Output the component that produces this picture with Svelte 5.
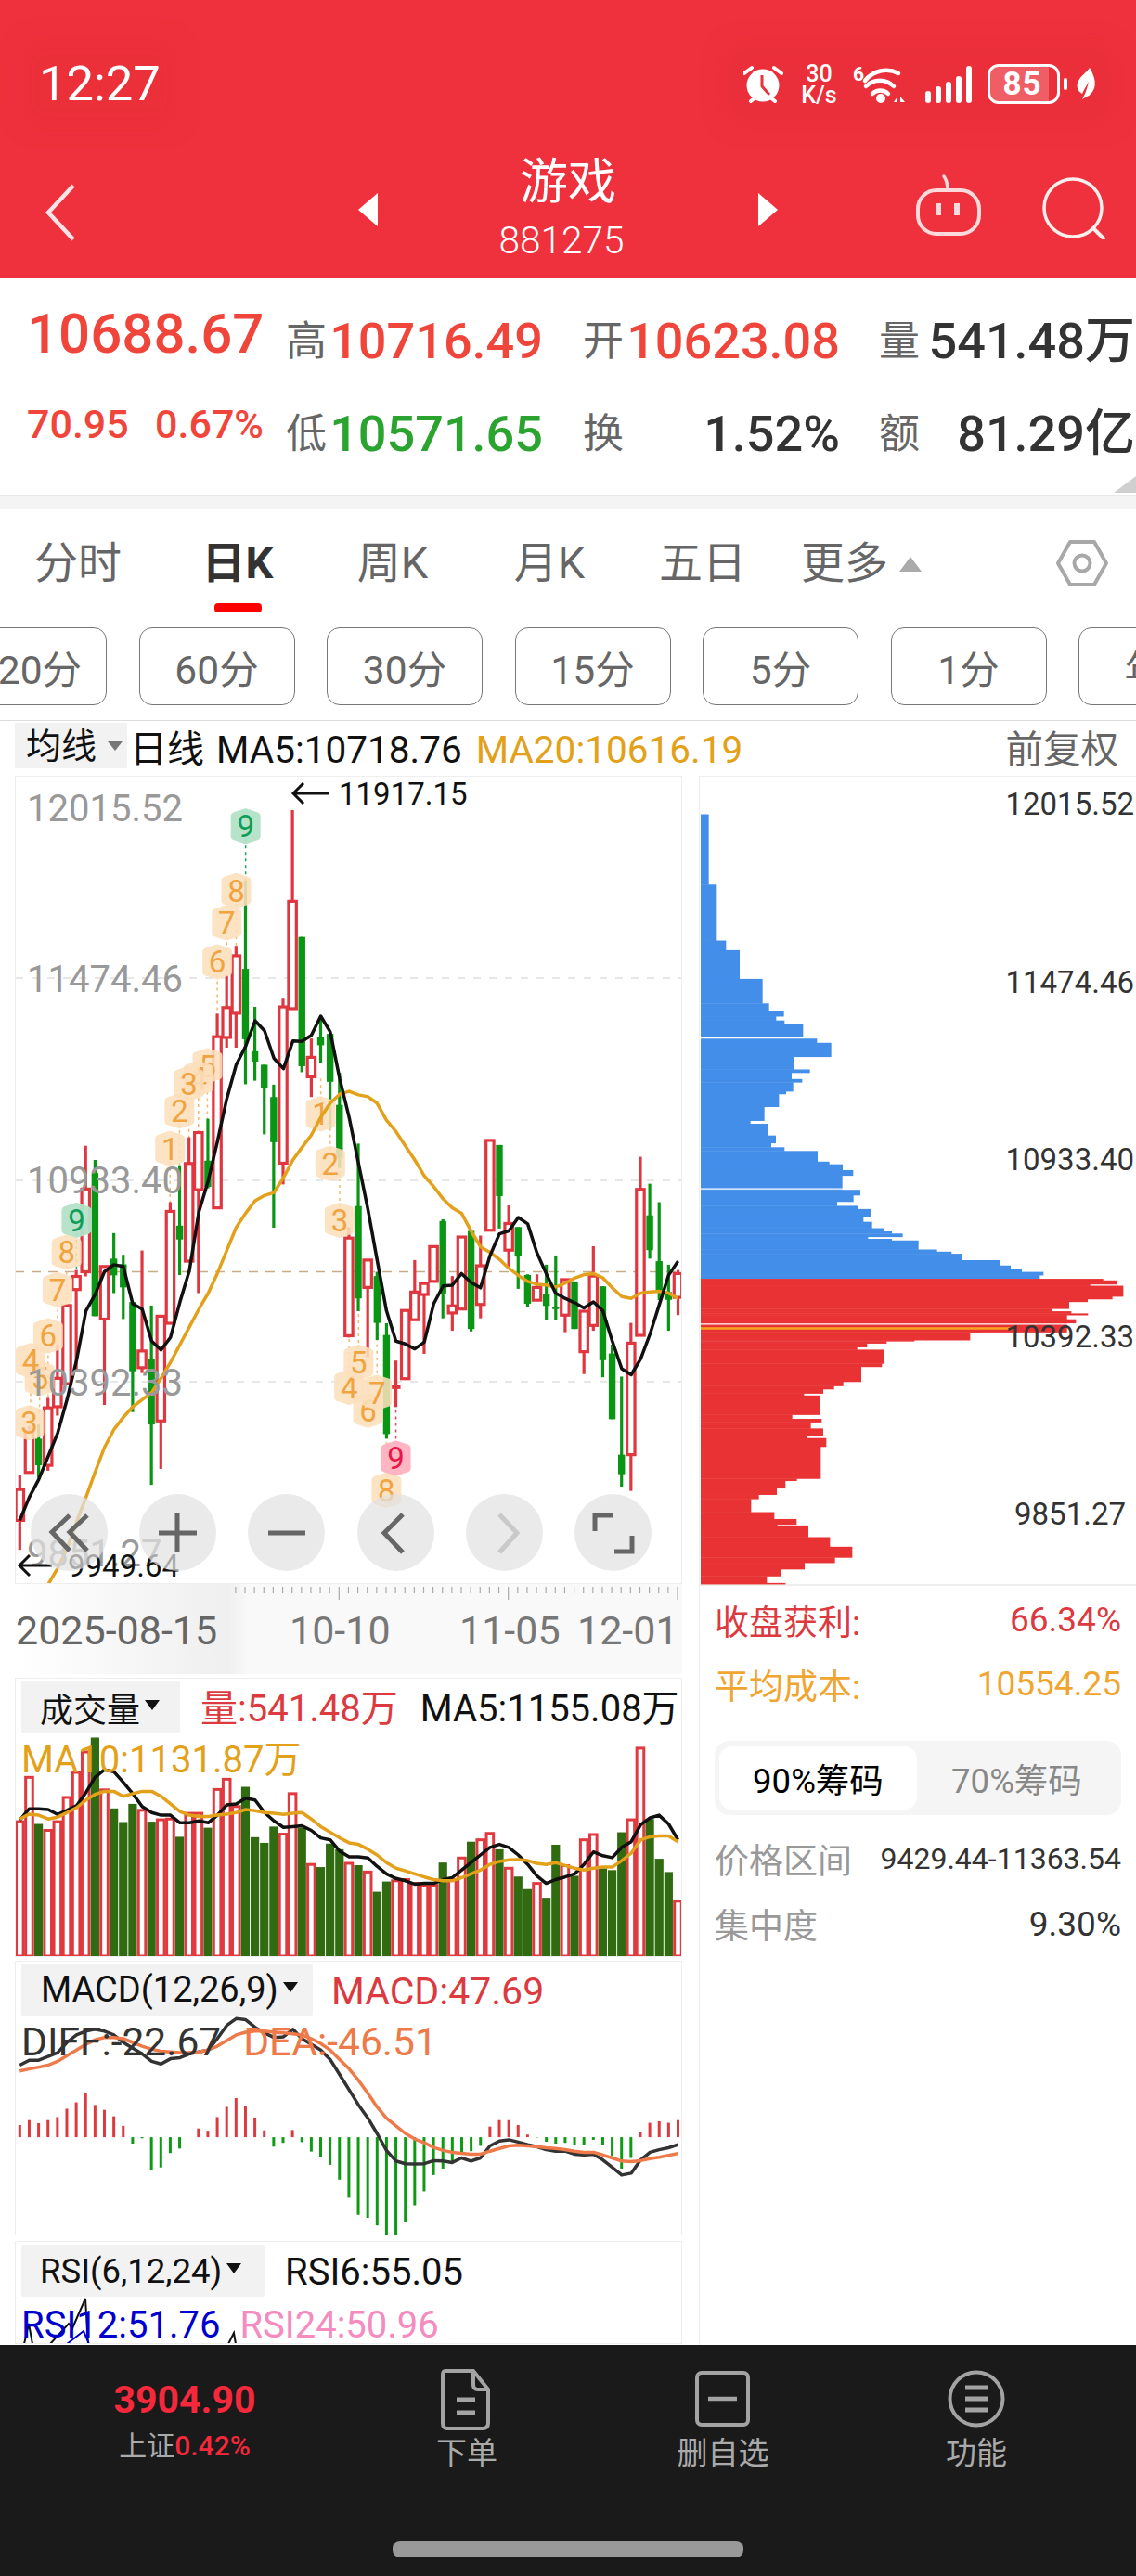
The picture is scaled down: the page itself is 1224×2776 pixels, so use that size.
<script>
  const X = (z) => z / 2.063;
  const Y3 = (z) => 1140 + z / 2.613;
  const Y4 = (z) => 1800 + z / 2.45;
  const cx = (i) => X(44 + 20.9 * i);
  const pts = (s, Y) => s.trim().split(/\s+/).map((p) => { const [a, b] = p.split(','); return `${X(+a).toFixed(1)},${Y(+b).toFixed(1)}`; }).join(' ');

  const raw = [
    [1178,1218,1305,1388,'r'],[1040,1055,1170,1170,'r'],[1035,1075,1150,1185,'g'],[960,988,1150,1165,'r'],[810,905,985,1010,'r'],
    [700,700,920,920,'r'],[600,618,655,880,'r'],[250,372,605,618,'r'],[290,327,730,730,'g'],[590,590,738,980,'r'],
    [496,568,615,665,'g'],[557,584,649,738,'g'],[690,690,885,1000,'g'],[545,828,875,890,'r'],[700,850,1035,1205,'g'],
    [730,730,1025,1160,'r'],[409,435,750,750,'r'],[305,475,514,614,'g'],[226,300,575,575,'r'],[213,213,374,665,'r'],
    [174,292,366,370,'g'],[-122,-57,425,425,'r'],[-231,-139,-55,-26,'r'],[-313,-285,-123,-26,'r'],[-498,-248,-50,77,'g'],
    [-141,-16,13,67,'g'],[22,22,89,218,'g'],[78,113,240,481,'g'],[-164,-141,299,359,'r'],[-695,-438,-136,-136,'r'],
    [-338,-338,26,43,'g'],[-52,1,56,113,'r'],[-115,-55,-33,17,'g'],[-65,-65,70,200,'g'],[45,135,283,313,'g'],
    [480,510,785,790,'r'],[244,420,680,716,'g'],[572,572,649,845,'r'],[605,617,749,797,'g'],[750,783,1062,1075,'g'],
    [855,923,935,986,'d'],[714,714,906,908,'r'],[572,662,740,740,'r'],[638,638,669,836,'r'],[534,534,632,632,'r'],
    [457,462,666,736,'g'],[617,701,721,771,'r'],[507,507,710,710,'r'],[488,490,766,773,'g'],[503,588,697,736,'r'],
    [235,235,488,488,'r'],[248,248,392,483,'g'],[418,469,544,592,'r'],[479,479,562,653,'g'],[612,614,695,705,'g'],
    [612,649,685,685,'r'],[585,669,701,740,'g'],[559,704,710,740,'g'],[627,627,727,775,'r'],[632,632,766,766,'g'],
    [716,716,830,893,'r'],[533,617,756,771,'r'],[646,646,854,902,'g'],[810,835,1020,1020,'g'],[900,1120,1175,1210,'g'],
    [749,806,1120,1222,'r'],[281,373,784,784,'r'],[357,446,544,568,'g'],[409,575,658,685,'g'],[585,662,684,771,'g'],
    [600,610,677,727,'r']
  ];
  const candles = raw.map((c, i) => ({ x: cx(i), hi: Y3(c[0]), t: Y3(c[1]), b: Y3(c[2]), lo: Y3(c[3]), k: c[4] }));

  const ma5 = pts("44,1305 65,1240 86,1190 107,1125 128,1060 149,965 170,855 191,715 211,670 232,605 253,585 274,590 295,695 316,710 337,800 358,825 379,790 400,690 421,601 442,436 463,348 483,240 504,118 525,22 546,-30 567,-102 588,-74 609,4 630,33 651,-45 671,-44 692,-61 713,-115 734,-71 755,61 776,170 797,300 818,430 838,570 859,715 880,800 901,808 922,822 943,803 964,695 985,645 1005,643 1026,610 1047,635 1068,650 1089,560 1110,498 1131,490 1152,452 1173,470 1193,550 1214,610 1235,665 1256,680 1277,692 1298,707 1319,690 1340,715 1361,800 1382,878 1403,895 1424,850 1445,780 1465,700 1486,615 1507,575", Y3);
  const ma20 = pts("105,1490 128,1440 149,1385 170,1310 191,1240 211,1170 232,1100 253,1050 274,1015 295,985 316,965 337,945 358,905 379,860 400,810 421,760 442,710 463,665 483,610 504,545 525,480 546,440 567,405 588,390 609,382 630,340 651,290 671,255 692,220 713,170 734,130 755,105 776,97 797,107 818,112 838,130 859,178 880,210 901,250 922,290 943,335 964,365 985,400 1005,425 1026,440 1047,490 1068,535 1089,550 1110,570 1131,595 1152,615 1173,632 1193,640 1214,642 1235,648 1256,637 1277,623 1298,613 1319,610 1340,622 1361,650 1382,675 1403,680 1424,665 1445,662 1465,660 1486,665 1507,680", Y3);

  const badges = [
    ['9',546,-650,-498,'g'],['8',525,-468,-313,'o'],['7',504,-378,-231,'o'],['6',483,-268,-122,'o'],
    ['5',461,25,175,'o'],['4',441,60,212,'o'],['3',420,75,226,'o'],['2',399,152,305,'o'],['1',378,258,410,'o'],
    ['9',170,460,600,'g'],['8',148,550,700,'o'],['7',128,655,810,'o'],['6',107,785,960,'o'],['5',88,905,1035,'o'],['4',68,855,1040,'o'],['3',65,1030,1178,'o'],
    ['1',713,160,50,'o'],['2',734,300,200,'o'],['3',755,460,313,'o'],['4',776,930,790,'o'],['5',797,860,716,'o'],['6',818,995,845,'o'],['7',838,945,797,'o'],['8',859,1220,1075,'o'],['9',880,1130,986,'p']
  ].map((b) => ({ d: b[0], x: X(b[1]), y: Y3(b[2]), ty: Y3(b[3]), k: b[4] }));
  const hex = (b) => `${b.x},${b.y - 15} ${b.x + 12},${b.y - 11} ${b.x + 12},${b.y + 11} ${b.x},${b.y + 15} ${b.x - 12},${b.y + 11} ${b.x - 12},${b.y - 11}`;

  const gridY = [1055, 1273, 1490];
  const axisLeft = [['12015.52', 871], ['11474.46', 1055], ['10933.40', 1272], ['10392.33', 1490], ['9851.27', 1674]];
  const ctrlIcons = ['first', 'plus', 'minus', 'prev', 'next', 'full'];

  const volTops = [402,285,408,425,402,338,272,218,180,318,367,403,355,372,402,397,395,442,380,380,418,317,290,362,310,443,458,415,435,328,418,515,522,460,475,512,517,535,587,560,558,555,565,570,570,510,555,498,455,450,433,475,525,547,580,565,603,463,518,545,450,436,525,530,430,397,208,395,500,535,612];
  const volK = raw.map((c) => (c[4] === 'g' ? 'g' : 'r'));
  const volMA = pts("44,398 65,368 86,368 107,370 128,383 149,372 170,360 191,325 211,285 232,265 253,270 274,298 295,328 316,362 337,378 358,385 379,385 400,405 421,405 442,400 463,405 483,385 504,358 525,355 546,340 567,345 588,378 609,400 630,417 651,415 671,413 692,425 713,445 734,450 755,480 776,495 797,495 818,498 838,520 859,540 880,552 901,558 922,567 943,565 964,565 985,555 1005,550 1026,530 1047,510 1068,490 1089,470 1110,462 1131,470 1152,490 1173,515 1193,545 1214,565 1235,555 1256,548 1277,540 1298,515 1319,482 1340,492 1361,497 1382,470 1403,455 1424,410 1445,392 1465,385 1486,408 1507,450", Y4);
  const volMA10 = pts("44,395 65,382 86,385 107,395 128,390 149,378 170,365 191,345 211,330 232,322 253,322 274,335 295,328 316,322 337,322 358,335 379,355 400,375 421,385 442,388 463,388 483,385 504,382 525,378 546,370 567,373 588,378 609,380 630,383 651,380 671,378 692,395 713,415 734,430 755,445 776,458 797,462 818,475 838,490 859,510 880,525 901,532 922,540 943,548 964,555 985,558 1005,558 1026,550 1047,540 1068,530 1089,515 1110,507 1131,503 1152,502 1173,505 1193,512 1214,515 1235,510 1256,518 1277,525 1298,530 1319,525 1340,522 1361,522 1382,505 1403,485 1424,450 1445,442 1465,440 1486,440 1507,455", Y4);

  const macd = [1203,1190,1198,1190,1182,1160,1143,1117,1150,1163,1180,1205,1252,1238,1322,1315,1277,1265,1235,1212,1218,1182,1155,1132,1152,1183,1217,1260,1250,1216,1248,1273,1288,1308,1347,1395,1440,1448,1468,1500,1497,1458,1415,1378,1335,1318,1300,1280,1272,1258,1207,1190,1190,1203,1228,1236,1247,1252,1250,1257,1255,1242,1255,1285,1318,1290,1222,1197,1193,1197,1190];
  const diff = pts("44,1045 65,1032 86,1032 107,1022 128,1012 149,985 170,965 191,955 211,950 232,955 253,965 274,985 295,1000 316,1015 337,1035 358,1042 379,1028 400,1025 421,1015 442,1010 463,1005 483,975 504,940 525,922 546,925 567,945 588,960 609,972 630,970 651,950 671,975 692,990 713,1005 734,1030 755,1070 776,1110 797,1150 818,1185 838,1225 859,1270 880,1298 901,1305 922,1306 943,1305 964,1297 985,1298 1005,1302 1026,1290 1047,1298 1068,1290 1089,1258 1110,1245 1131,1242 1152,1248 1173,1255 1193,1260 1214,1268 1235,1272 1256,1272 1277,1280 1298,1282 1319,1280 1340,1295 1361,1315 1382,1335 1403,1330 1424,1295 1445,1275 1465,1268 1486,1263 1507,1255", Y4);
  const dea = pts("44,1060 65,1055 86,1050 107,1045 128,1035 149,1020 170,1005 191,990 211,978 232,972 253,972 274,975 295,985 316,995 337,1003 358,1008 379,1010 400,1012 421,1012 442,1010 463,1005 483,995 504,980 525,965 546,958 567,955 588,955 609,958 630,960 651,962 671,965 692,975 713,988 734,1005 755,1030 776,1055 797,1085 818,1120 838,1155 859,1185 880,1205 901,1225 922,1240 943,1250 964,1262 985,1270 1005,1275 1026,1278 1047,1280 1068,1280 1089,1272 1110,1265 1131,1258 1152,1256 1173,1258 1193,1260 1214,1263 1235,1265 1256,1268 1277,1272 1298,1275 1319,1275 1340,1282 1361,1290 1382,1298 1403,1300 1424,1297 1445,1292 1465,1288 1486,1283 1507,1278", Y4);

  const blue = [[135,70],[267,96],[372,126],[390,170],[444,244],[490,265],[504,313],[514,288],[522,315],[528,375],[555,420],[564,466],[590,347],[614,397],[620,338],[632,372],[638,343],[655,320],[660,297],[684,250],[710,205],[716,260],[738,287],[752,272],[760,315],[767,422],[787,460],[792,503],[803,537],[813,502],[840,560],[850,538],[862,485],[870,552],[876,596],[890,570],[900,598],[912,635],[918,662],[922,697],[928,585],[932,662],[935,748],[952,808],[956,855],[960,890],[972,1010],[982,1046],[988,1082],[994,1152],[1000,1140],[1007,0]];
  const red = [[1007,1345],[1010,1388],[1017,1303],[1020,1410],[1040,1375],[1045,1295],[1050,1235],[1063,1180],[1068,1242],[1072,1296],[1075,1228],[1083,1257],[1090,1228],[1107,948],[1108,915],[1122,735],[1124,645],[1128,582],[1135,550],[1140,638],[1166,630],[1172,563],[1200,505],[1208,475],[1214,440],[1222,378],[1226,428],[1262,340],[1270,435],[1276,400],[1288,440],[1302,388],[1306,450],[1322,432],[1382,355],[1386,318],[1400,290],[1412,232],[1420,207],[1445,282],[1458,354],[1468,292],[1470,392],[1492,462],[1510,534],[1530,478],[1540,380],[1552,303],[1565,258],[1578,318],[1580,0]];
  const HY = (z) => 800 + z / 1.742;
  const steps = (arr) => arr.slice(0, -1).map((s, i) => ({ y: HY(s[0]), h: HY(arr[i + 1][0]) - HY(s[0]) + 0.4, w: (s[1] - 44) / 3 }));
  const blueRects = steps(blue);
  const redRects = steps(red);
  const histLabels = [['12015.52', 866, 1222], ['11474.46', 1058, 1222], ['10933.40', 1249, 1222], ['10392.33', 1440, 1222], ['9851.27', 1631, 1213]];

  const ticks = Array.from({ length: 48 }, (_, i) => 730 - i * 10.13);
  const chips = ['120分', '60分', '30分', '15分', '5分', '1分', '年K'];
  const tabs = ['分时', '日K', '周K', '月K', '五日'];
</script>

<div class="page">
  <header class="head">
    <div class="status">
      <span class="time">12:27</span>
      <div class="sicons">
        <svg class="alarm" viewBox="800 70 44 42" width="44" height="42" aria-hidden="true">
          <circle cx="821" cy="92" r="17.5" fill="#fff" />
          <path d="M820 81v12l8 9" fill="none" stroke="#e8323b" stroke-width="3" />
          <path d="M801 79l8-6M841 79l-8-6M808 109l5-4M834 109l-5-4" stroke="#fff" stroke-width="4" stroke-linecap="round" />
        </svg>
        <div class="speed"><span>30</span><span>K/s</span></div>
        <svg class="wifi" viewBox="918 68 60 46" width="60" height="46" aria-hidden="true">
          <text x="920" y="87" class="six">6</text>
          <path d="M933 87a29 29 0 0 1 36 -8M934 93a21 21 0 0 1 30 0M941 101a12 12 0 0 1 17 0" fill="none" stroke="#fff" stroke-width="4.5" stroke-linecap="round" />
          <circle cx="950" cy="106" r="5" fill="#fff" />
          <path d="M964 110l4-6v6zM971 104l5 6h-5z" fill="#fff" />
        </svg>
        <div class="signal" aria-hidden="true"><i class="s1"></i><i class="s2"></i><i class="s3"></i><i class="s4"></i><i class="s5"></i></div>
        <div class="batt"><span>85</span></div>
        <i class="nub"></i>
        <svg class="leaf" viewBox="0 0 22 34" width="22" height="34" aria-hidden="true">
          <path d="M15 0C20 8 22 16 20 22c-2 5-5 8-8 9l-5 3 3-6c2-5 3-9 4-13-2 4-5 8-7 13C2 25 0 20 3 14 6 8 12 5 15 0z" fill="#fff" />
        </svg>
      </div>
    </div>
    <nav class="nav">
      <div class="backcell">
        <svg viewBox="0 0 34 62" width="34" height="62" aria-hidden="true"><path d="M31 2L4 31l27 29" fill="none" stroke="#fde3e4" stroke-width="4.5" /></svg>
      </div>
      <svg viewBox="0 0 21 36" width="21" height="36" aria-hidden="true"><path d="M21 0v36L0 18z" fill="#fff" /></svg>
      <div class="title"><span class="name">游戏</span><span class="code">881275</span></div>
      <svg viewBox="0 0 21 36" width="21" height="36" aria-hidden="true"><path d="M0 0v36l21-18z" fill="#fff" /></svg>
      <i></i>
      <svg viewBox="987 188 70 66" width="70" height="66" aria-hidden="true">
        <rect x="989" y="205" width="66" height="47" rx="20" fill="none" stroke="#fdd9db" stroke-width="4" />
        <path d="M1021 205c0-6-1-11-4-15" fill="none" stroke="#fdd9db" stroke-width="3.5" stroke-linecap="round" />
        <rect x="1008" y="219" width="6" height="13" fill="#fdd9db" /><rect x="1028" y="219" width="6" height="13" fill="#fdd9db" />
      </svg>
      <i></i>
      <svg viewBox="1122 190 68 68" width="68" height="68" aria-hidden="true">
        <circle cx="1155" cy="224" r="31" fill="none" stroke="#fdeeee" stroke-width="3.5" />
        <path d="M1177 246l11 11" stroke="#fdeeee" stroke-width="4" stroke-linecap="round" />
      </svg>
    </nav>
  </header>

  <section class="quote">
    <div class="qrow r1">
      <div class="c1"><b class="big red">10688.67</b></div>
      <div class="cell c2"><span class="lab">高</span><b class="val red">10716.49</b></div>
      <div class="cell c3"><span class="lab">开</span><b class="val red">10623.08</b></div>
      <div class="cell c4"><span class="lab">量</span><b class="val dark">541.48万</b></div>
    </div>
    <div class="qrow r2">
      <div class="c1 pair red"><span>70.95</span><span>0.67%</span></div>
      <div class="cell c2"><span class="lab">低</span><b class="val green">10571.65</b></div>
      <div class="cell c3"><span class="lab">换</span><b class="val dark">1.52%</b></div>
      <div class="cell c4"><span class="lab">额</span><b class="val dark">81.29亿</b></div>
    </div>
    <i class="corner"></i>
  </section>
  <div class="divider"></div>

  <div class="tabs">
    {#each tabs as t, i}
      <div class="tab" class:active={i === 1}><span>{t}</span>{#if i === 1}<i class="bar"></i>{/if}</div>
    {/each}
    <div class="tab more"><span>更多</span><i class="up"></i></div>
    <svg class="hexi" viewBox="0 0 56 52" width="56" height="52" aria-hidden="true">
      <path d="M15 3h26l13 23-13 23H15L2 26z" fill="none" stroke="#a8a8a8" stroke-width="4" stroke-linejoin="round" />
      <circle cx="28" cy="26" r="8.5" fill="none" stroke="#a8a8a8" stroke-width="4" />
    </svg>
  </div>
  <div class="chips">
    {#each chips as c}<div class="chip">{c}</div>{/each}
  </div>

  <div class="legend">
    <div class="sel">均线<i class="dn"></i></div>
    <span class="ln">日线</span>
    <span class="ln ma5">MA5:10718.76</span>
    <span class="ln ma20">MA20:10616.19</span>
    <span class="fq">前复权</span>
  </div>

  <div class="main">
    <div class="left">
      <div class="panel price">
        <svg viewBox="16 837 719 871" width="719" height="871" aria-hidden="false">
          <defs><clipPath id="pc"><rect x="16" y="837" width="719" height="871" /></clipPath></defs>
          <g clip-path="url(#pc)">
            {#each gridY as y}<line x1="17" x2="734" y1={y} y2={y} class="grid" />{/each}
            <line x1="16" x2="735" y1="1371.5" y2="1371.5" class="last" />
            {#each badges as b}
              <line x1={b.x} x2={b.x} y1={b.y} y2={b.ty} class="dash {b.k}" />
            {/each}
            {#each candles as c}
              {#if c.k === 'g'}
                <line x1={c.x} x2={c.x} y1={c.hi} y2={c.lo} class="wg" />
                <rect x={c.x - 3.7} y={c.t} width="7.4" height={c.b - c.t} class="bg" />
              {:else if c.k === 'd'}
                <line x1={c.x} x2={c.x} y1={c.hi} y2={c.lo} class="wr" />
                <rect x={c.x - 5} y={c.t} width="10" height={c.b - c.t} class="br" />
              {:else}
                <line x1={c.x} x2={c.x} y1={c.hi} y2={c.t} class="wr" />
                <line x1={c.x} x2={c.x} y1={c.b} y2={c.lo} class="wr" />
                <rect x={c.x - 4.2} y={c.t} width="8.4" height={c.b - c.t} class="hr" />
              {/if}
            {/each}
            {#each badges as b}
              <polygon points={hex(b)} class="badge {b.k}" />
              <text x={b.x} y={b.y + 12} class="bt {b.k}">{b.d}</text>
            {/each}
            <polyline points={ma20} class="l ma20l" />
            <polyline points={ma5} class="l ma5l" />
            {#each axisLeft as a}<text x="29" y={a[1] + 15} class="axl">{a[0]}</text>{/each}
            <path d="M354 856h-38m11-11l-11 11 11 11" class="arrow" />
            <text x="365" y="868" class="ext">11917.15</text>
            <path d="M56 1688H21m11-11l-11 11 11 11" class="arrow" />
            <text x="73" y="1700" class="ext">9949.64</text>
          </g>
        </svg>
        <div class="ctrls">
          {#each ctrlIcons as ic}
            <div class="ctrl">
              <svg viewBox="0 0 83 83" width="83" height="83" aria-hidden="true">
                {#if ic === 'first'}<path d="M42 23L23 41l19 20M61 23L42 41l19 20" class="ci" />
                {:else if ic === 'plus'}<path d="M21 42h41M41 21v41" class="ci" />
                {:else if ic === 'minus'}<path d="M22 42h40" class="ci" />
                {:else if ic === 'prev'}<path d="M49 22L29 42l20 21" class="ci" />
                {:else if ic === 'next'}<path d="M36 22l19 20-19 21" class="ci off" />
                {:else}<path d="M22 40V23h20M62 45v17H43" class="ci" />{/if}
              </svg>
            </div>
          {/each}
        </div>
      </div>

      <div class="dates">
        <svg viewBox="16 1708 719 97" width="719" height="97" aria-hidden="false">
          <defs>
            <linearGradient id="fade" x1="0" x2="1" y1="0" y2="0">
              <stop offset="0" stop-color="#fff" />
              <stop offset="0.92" stop-color="#efefef" />
              <stop offset="1" stop-color="#f9f9f9" />
            </linearGradient>
          </defs>
          <rect x="16" y="1708" width="719" height="97" fill="#f9f9f9" />
          <rect x="16" y="1708" width="250" height="97" fill="url(#fade)" />
          {#each ticks as t}
            <line x1={t} x2={t} y1="1711" y2={[730, 547.7, 365.3].some((v) => Math.abs(v - t) < 2) ? 1725 : 1718} class="tick" />
          {/each}
          <text x="17" y="1773" class="dt strong">2025-08-15</text>
          <text x="312" y="1773" class="dt">10-10</text>
          <text x="495" y="1773" class="dt">11-05</text>
          <text x="622" y="1773" class="dt">12-01</text>
        </svg>
      </div>

      <div class="panel vol">
        <svg viewBox="16 1809 719 301" width="719" height="301" aria-hidden="true">
          {#each volTops as t, i}
            {#if volK[i] === 'g'}
              <rect x={cx(i) - 4.6} y={Y4(t)} width="9.2" height={2109 - Y4(t)} fill="#306b12" />
            {:else}
              <rect x={cx(i) - 3.8} y={Y4(t)} width="7.6" height={2109 - Y4(t)} class="hv" />
            {/if}
          {/each}
          <polyline points={volMA} class="l ma5l" />
          <polyline points={volMA10} class="l ma20l" />
        </svg>
        <div class="phead ph-vol">
          <div class="prow">
            <div class="psel w-vol">成交量<i class="dk"></i></div>
            <span class="pt r ml-vol">量:541.48万</span>
            <span class="pt ml-vol2">MA5:1155.08万</span>
          </div>
          <div class="prow2 gap7"><span class="pt o">MA10:1131.87万</span></div>
        </div>
      </div>

      <div class="panel macd">
        <svg viewBox="16 2114 719 296" width="719" height="296" aria-hidden="true">
          {#each macd as m, i}
            <line x1={cx(i)} x2={cx(i)} y1={Y4(1235)} y2={Y4(m)} stroke={m < 1235 ? '#dc3a3f' : '#0f9a14'} stroke-width="3" />
          {/each}
          <polyline points={diff} class="l dk" />
          <polyline points={dea} class="l de" />
        </svg>
        <div class="phead ph-macd">
          <div class="prow">
            <div class="psel w-macd">MACD(12,26,9)<i class="dk"></i></div>
            <span class="pt r ml-m big2">MACD:47.69</span>
          </div>
          <div class="prow2 gap9">
            <span class="pt d big2">DIFF:-22.67</span>
            <span class="pt de ml-dea big2">DEA:-46.51</span>
          </div>
        </div>
      </div>

      <div class="panel rsi">
        <svg viewBox="16 2416 719 111" width="719" height="111" aria-hidden="true">
          <path d="M26 2527l5-22 4 22M54 2527l20-22 4 5 14-32 3 49M246 2527l6-12 2 12" fill="none" stroke="#111" stroke-width="2" />
          <path d="M72 2527l18-14 6 14" fill="none" stroke="#0000cc" stroke-width="2" />
        </svg>
        <div class="phead ph-rsi">
          <div class="prow">
            <div class="psel w-rsi">RSI(6,12,24)<i class="dk"></i></div>
            <span class="pt ml-r">RSI6:55.05</span>
          </div>
          <div class="prow2 gap6">
            <span class="pt bl">RSI12:51.76</span>
            <span class="pt pk ml-r2">RSI24:50.96</span>
          </div>
        </div>
      </div>
    </div>

    <aside class="right">
      <div class="hist">
        <svg viewBox="754 837 470 871" width="470" height="871" aria-hidden="false">
          {#each blueRects as r}<rect x="755" y={r.y} width={r.w} height={r.h} fill="#438ee9" />{/each}
          {#each redRects as r}<rect x="755" y={r.y} width={r.w} height={r.h} fill="#e83233" />{/each}
          <line x1="755" x2="930" y1={HY(555)} y2={HY(555)} class="wl" />
          <line x1="755" x2="1010" y1={HY(838)} y2={HY(838)} class="wl" />
          <line x1="755" x2="1170" y1={HY(1092)} y2={HY(1092)} class="wl" />
          <line x1="755" x2="1093" y1={HY(1100)} y2={HY(1100)} stroke="#f7a51f" stroke-width="2.5" />
          {#each histLabels as l}<text x={l[2]} y={l[1] + 12} class="axr">{l[0]}</text>{/each}
        </svg>
      </div>
      <div class="stats">
        <div class="srow r"><span>收盘获利:</span><span>66.34%</span></div>
        <div class="srow o"><span>平均成本:</span><span>10554.25</span></div>
        <div class="seg"><div class="on">90%筹码</div><div class="off">70%筹码</div></div>
        <div class="srow info first"><span class="k">价格区间</span><span class="v small">9429.44-11363.54</span></div>
        <div class="srow info"><span class="k">集中度</span><span class="v">9.30%</span></div>
      </div>
    </aside>
  </div>

  <footer class="foot">
    <div class="fgrid">
      <div class="fq1"><b>3904.90</b><span class="sub">上证<em>0.42%</em></span></div>
      <div class="fi">
        <svg viewBox="0 0 70 66" width="70" height="66" aria-hidden="true">
          <path d="M12 2h30l16 20v36q0 6-6 6H14q-5 0-5-6V6q0-4 3-4z" fill="none" stroke="#a3a3a3" stroke-width="4" />
          <path d="M42 3v14q0 5 5 5h10" fill="none" stroke="#a3a3a3" stroke-width="4" />
          <path d="M24 33h20M24 47h20" stroke="#a3a3a3" stroke-width="5" />
        </svg>
        <span>下单</span>
      </div>
      <div class="fi">
        <svg viewBox="0 0 70 66" width="70" height="66" aria-hidden="true">
          <rect x="7" y="4" width="55" height="56" rx="5" fill="none" stroke="#a3a3a3" stroke-width="4" />
          <path d="M19 32h31" stroke="#a3a3a3" stroke-width="4.5" />
        </svg>
        <span>删自选</span>
      </div>
      <div class="fi">
        <svg viewBox="0 0 70 66" width="70" height="66" aria-hidden="true">
          <circle cx="35" cy="32" r="28.5" fill="none" stroke="#a3a3a3" stroke-width="4" />
          <path d="M23 20h24M23 32h24M23 44h24" stroke="#a3a3a3" stroke-width="5" />
        </svg>
        <span>功能</span>
      </div>
    </div>
    <i class="home"></i>
  </footer>
</div>

<style>
  :global(body) { margin: 0; background: #fff; }
  .page {
    width: 1224px; height: 2776px; overflow: hidden; background: #fff; display: flex; flex-direction: column;
    font-family: Roboto, "Noto Sans CJK SC", sans-serif; color: #333;
  }
  i { display: block; font-style: normal; }
  svg { display: block; }

  .head { height: 300px; flex: none; background: #ee313c; color: #fff; }
  .status { height: 146px; display: flex; justify-content: space-between; padding: 0 43px 0 42px; box-sizing: border-box; }
  .time { font-size: 52.5px; line-height: 56px; margin-top: 62px; font-weight: 400; height: 56px; background: rgba(170, 20, 30, .04); box-shadow: 0 0 30px 24px rgba(170, 20, 30, .04); }
  .sicons { display: flex; align-items: flex-start; height: 46px; margin-top: 68px; background: rgba(170, 20, 30, .05); box-shadow: 0 0 30px 24px rgba(170, 20, 30, .05); }
  .alarm { margin-top: 2px; }
  .speed { display: flex; flex-direction: column; align-items: center; width: 44px; margin-left: 16px; font-size: 25px; line-height: 23px; font-weight: 500; }
  .wifi { margin-left: 12px; }
  .six { font: 700 21px Roboto, sans-serif; fill: #fff; }
  .signal { display: flex; align-items: flex-end; gap: 4.5px; height: 40px; margin: 3px 0 0 20px; }
  .signal i { width: 6.5px; background: #fff; border-radius: 3px; }
  .s1 { height: 13px; } .s2 { height: 18px; } .s3 { height: 23px; } .s4 { height: 29px; } .s5 { height: 40px; }
  .batt { width: 78px; height: 43px; margin-left: 17px; box-sizing: border-box; border: 3.5px solid #fff; border-radius: 12px; display: flex; align-items: center; background: linear-gradient(90deg, rgba(255,255,255,.22) 87%, transparent 87%); background-clip: padding-box; justify-content: center; padding-right: 3px; margin-top: 1px; }
  .batt span { font-size: 35px; font-weight: 700; line-height: 36px; letter-spacing: 1px; }
  .nub { width: 4px; height: 13px; background: #fff; border-radius: 2px; margin: 16px 0 0 4px; }
  .leaf { margin: 5px 0 0 9px; }

  .nav { display: grid; grid-template-columns: 386px 21px 410px 21px 149px 70px 66px 68px; align-items: center; height: 154px; }
  .nav > svg { align-self: start; }
  .nav > svg:nth-of-type(1), .nav > svg:nth-of-type(2) { margin-top: 62px; }
  .nav > svg:nth-of-type(3) { margin-top: 42px; }
  .nav > svg:nth-of-type(4) { margin-top: 44px; }
  .backcell { padding-left: 48px; align-self: start; margin-top: 52px; }
  .title { display: flex; flex-direction: column; align-items: center; align-self: start; margin-top: 16px; }
  .name { font-size: 52px; line-height: 70px; font-weight: 400; }
  .code { font-size: 40.5px; line-height: 44px; font-weight: 300; margin: 5px 14px 0 0; }

  .quote { height: 233px; flex: none; padding: 18px 0 0 29px; box-sizing: border-box; position: relative; }
  .qrow { display: flex; height: 100px; align-items: center; }
  .c1 { width: 255px; flex: none; }
  .r1 .c1 { padding-bottom: 16px; }
  .r2 .c1 { padding-bottom: 22px; }
  .big { font-size: 60px; font-weight: 500; line-height: 70px; }
  .pair { display: flex; justify-content: space-between; font-size: 43px; font-weight: 500; line-height: 50px; }
  .cell { display: flex; justify-content: space-between; align-items: center; width: 277px; flex: none; }
  .c2 { margin-left: 24px; } .c3 { margin-left: 43px; } .c4 { margin-left: 42px; width: 276px; }
  .lab { font-size: 44px; color: #666; line-height: 56px; }
  .val { font-size: 54px; font-weight: 500; line-height: 60px; white-space: nowrap; }
  .red { color: #f0453b; } .green { color: #2aa32f; } .dark { color: #333; }
  .corner { position: absolute; right: 0; bottom: 2px; width: 24px; height: 18px; background: #cfcfcf; clip-path: polygon(100% 0, 100% 100%, 0 100%); }
  .divider { height: 16px; flex: none; background: #f4f4f4; border-top: 1px solid #e8e8e8; box-sizing: border-box; }

  .tabs { height: 115px; flex: none; display: grid; grid-template-columns: 168px 176px 158px 180px 150px 192px 114px 56px; box-sizing: border-box; }
  .tab { display: flex; flex-direction: column; align-items: center; padding-top: 30px; font-size: 47px; line-height: 56px; color: #666; }
  .tab.active { color: #333; font-weight: 700; }
  .bar { width: 51px; height: 10px; background: #f00; border-radius: 4px; margin-top: 15px; }
  .more { flex-direction: row; justify-content: center; align-items: flex-start; }
  .up { width: 0; height: 0; border: 12px solid transparent; border-top: 0; border-bottom: 16px solid #aaa; margin: 21px 0 0 12px; }
  .hexi { margin-top: 32px; grid-column: 8; }

  .chips { height: 113px; flex: none; padding-top: 12px; box-sizing: border-box; display: flex; gap: 34.5px; margin-left: -53px; border-bottom: 1px solid #ddd; width: 1277px; }
  .chip { width: 168px; height: 84px; flex: none; box-sizing: border-box; border: 1.5px solid #777; border-radius: 14px; display: flex; align-items: center; justify-content: center; font-size: 42.5px; color: #666; }

  .legend { height: 59px; flex: none; display: flex; align-items: center; padding: 0 19px 0 16px; font-size: 40.5px; line-height: 50px; color: #111; box-sizing: border-box; white-space: nowrap; }
  .sel { width: 121px; height: 49px; box-sizing: border-box; background: #f2f2f2; padding-left: 12px; font-size: 38px; line-height: 46px; display: flex; align-items: center; margin-bottom: 6px; }
  .dn { width: 0; height: 0; border: 8px solid transparent; border-bottom: 0; border-top: 10px solid #777; margin-left: 12px; }
  .ln { margin: 3px 0 0 3px; font-size: 40px; }
  .ln.ma5 { margin-left: 13px; font-size: 40.5px; } .ln.ma20 { margin-left: 15px; color: #e3a11a; font-size: 40.5px; }
  .fq { margin: 3px 0 0 auto; color: #666; }

  .main { flex: 1; min-height: 0; display: grid; grid-template-columns: 754px 470px; overflow: hidden; }
  .left { padding-left: 16px; width: 735px; }
  .panel { position: relative; width: 719px; outline: 1px solid #eee; outline-offset: -1px; overflow: hidden; }
  .price { height: 871px; }
  .grid { stroke: #e0e0e0; stroke-width: 1.5; stroke-dasharray: 8 9; }
  .last { stroke: #c8ab88; stroke-width: 1.5; stroke-dasharray: 10 8; }
  .dash { stroke-width: 1.5; stroke-dasharray: 3 4; stroke: #f2b96c; }
  .dash.g { stroke: #1fa35c; } .dash.p { stroke: #e8415f; }
  .wg { stroke: #0a9614; stroke-width: 3.2; }
  .bg { fill: #0a9614; }
  .wr { stroke: #e0363f; stroke-width: 3.2; }
  .br { fill: #e0363f; }
  .hr { fill: #fff; stroke: #e0363f; stroke-width: 3.2; }
  .badge { stroke-width: 8; stroke-linejoin: round; }
  .badge.o { fill: #fce0bd; stroke: #fce0bd; opacity: .88; }
  .badge.g { fill: #b4e2c8; stroke: #b4e2c8; opacity: .95; }
  .badge.p { fill: #ffb5c2; stroke: #ffb5c2; }
  .bt { font: 400 33px Roboto, sans-serif; text-anchor: middle; }
  .bt.o { fill: #f0a33e; } .bt.g { fill: #0f9d58; } .bt.p { fill: #e8174a; }
  .l { fill: none; stroke-width: 3.5; stroke-linejoin: round; }
  .ma5l { stroke: #111; } .ma20l { stroke: #e3a01b; }
  polyline.dk { stroke: #333; } polyline.de { stroke: #ee7a4a; }
  .axl { font: 400 40px Roboto, sans-serif; fill: #999; }
  .ext { font: 400 33px Roboto, sans-serif; fill: #111; }
  .arrow { fill: none; stroke: #111; stroke-width: 3; }
  .ctrls { position: absolute; left: 17px; top: 774px; display: flex; gap: 34.2px; }
  .ctrl { width: 83px; height: 83px; border-radius: 50%; background: rgba(226, 226, 226, .72); flex: none; }
  .ci { fill: none; stroke: #666; stroke-width: 5; }
  .ci.off { stroke: #c9c9c9; }

  .dates { height: 97px; width: 719px; }
  .tick { stroke: #aaa; stroke-width: 1.2; }
  .dt { font: 400 43px Roboto, sans-serif; fill: #777; }
  .dt.strong { fill: #666; }

  .vol { height: 301px; margin-top: 4px; }
  .macd { height: 296px; margin-top: 4px; }
  .rsi { height: 111px; margin-top: 6px; }
  .hv { fill: #fff; stroke: #e0393f; stroke-width: 3; }
  .phead { position: absolute; left: 7px; right: 0; }
  .ph-vol { top: 4px; } .ph-macd { top: 3px; } .ph-rsi { top: 4px; }
  .prow { display: flex; align-items: center; height: 56px; white-space: nowrap; }
  .prow2 { display: flex; align-items: center; height: 40px; margin-left: 0; white-space: nowrap; }
  .gap7 { margin-top: 9px; } .gap9 { margin-top: 9px; } .gap6 { margin-top: 11px; }
  .psel { height: 56px; box-sizing: border-box; background: #f2f2f2; padding-left: 20px; display: flex; align-items: center; font-size: 36px; color: #111; border-radius: 2px; flex: none; }
  .w-vol { width: 171px; } .w-macd { width: 314px; font-size: 38px; padding-left: 21px; } .w-rsi { width: 262px; font-size: 36.5px; }
  i.dk { width: 0; height: 0; border: 8.5px solid transparent; border-bottom: 0; border-top: 11px solid #111; margin-left: 5px; margin-bottom: 6px; }
  .pt { font-size: 40px; line-height: 40px; color: #111; padding-top: 4px; }
  .prow2 .pt { padding-top: 0; }
  .pt.big2 { font-size: 41px; }
  .prow2 .pt.big2 { font-size: 42.5px; }
  .pt.r { color: #dc3a3f; } .pt.o { color: #e3a11a; } .pt.d { color: #333; } .pt.de { color: #ee7a4a; }
  .pt.bl { color: #0000cc; } .pt.pk { color: #f48cc0; }
  .ml-vol { margin-left: 22px; } .ml-vol2 { margin-left: 24px; }
  .ml-m { margin-left: 20px; } .ml-dea { margin-left: 24px; }
  .ml-r { margin-left: 22px; } .ml-r2 { margin-left: 21px; }

  .right { border-left: 1px solid #eee; box-sizing: border-box; width: 471px; margin-left: -1px; }
  .hist { height: 873px; border-top: 1px solid #eee; border-bottom: 2px solid #eee; box-sizing: border-box; }
  .wl { stroke: #fff; stroke-width: 1.2; }
  .axr { font: 400 33px Roboto, sans-serif; fill: #333; text-anchor: end; }
  .stats { padding: 2px 16px 0 16px; }
  .srow { display: flex; justify-content: space-between; align-items: center; height: 69px; font-size: 37px; white-space: nowrap; }
  .srow.r { color: #dc3a3f; } .srow.o { color: #f0a530; }
  .seg { margin-top: 27px; height: 80px; background: #f5f5f5; border-radius: 16px; display: flex; padding: 6px 5px; box-sizing: border-box; font-size: 36.5px; align-items: center; }
  .seg .on { width: 213px; height: 68px; background: #fff; border-radius: 14px; color: #000; display: flex; align-items: center; justify-content: center; }
  .seg .off { flex: 1; color: #888; text-align: center; }
  .info { height: 70px; }
  .info.first { margin-top: 12px; }
  .k { color: #999; } .v { color: #333; }
  .v.small { font-size: 32px; }

  .foot { height: 249px; flex: none; background: #1a1a1a; display: flex; flex-direction: column; }
  .fgrid { display: grid; grid-template-columns: 398px 210px 342px 204px; padding-top: 26px; }
  .fq1 { display: flex; flex-direction: column; align-items: center; padding-top: 9px; }
  .fq1 b { font-size: 41px; line-height: 48px; color: #f5283c; font-weight: 700; }
  .sub { font-size: 30px; color: #aaa; line-height: 40px; margin-top: 6px; }
  .sub em { font-style: normal; color: #f5283c; font-weight: 500; }
  .fi { display: flex; flex-direction: column; align-items: center; font-size: 33px; color: #aaa; line-height: 40px; }
  .fi svg { margin-bottom: 5px; }
  .home { width: 378px; height: 18px; background: #999; border-radius: 8px; margin: auto auto 20px; }
</style>
